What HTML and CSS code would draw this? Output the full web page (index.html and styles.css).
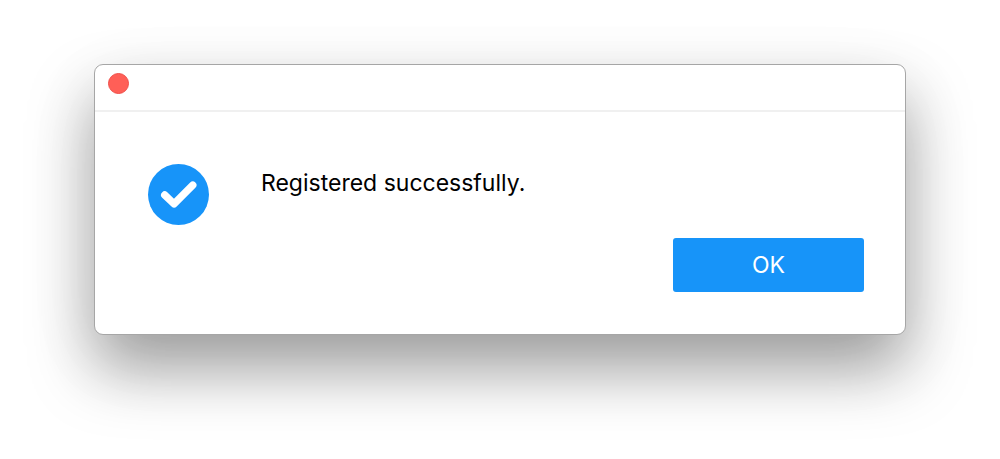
FILE: index.html
```
<!DOCTYPE html>
<html lang="en">
  <head>
    <meta charset="UTF-8" />
    <meta name="viewport" content="width=device-width, initial-scale=1.0" />
    <title>Registration</title>
    <link rel="stylesheet" href="styles.css">
  </head>
  <body>
    <div class="dialog" role="alertdialog" aria-labelledby="message">
      <div class="titlebar">
        <button class="button-close" type="button" aria-label="Close"></button>
      </div>
      <div class="content">
        <div class="content-message">
          <svg class="icon-success" viewBox="0 0 62 62" aria-hidden="true">
            <circle cx="31" cy="31" r="31" fill="#1794f9" />
            <path
              d="M17 31.5 L26.5 40.5 L45.5 21.5"
              fill="none"
              stroke="#fff"
              stroke-width="7.5"
              stroke-linecap="round"
              stroke-linejoin="round"
            />
          </svg>
          <p class="message" id="message">Registered successfully.</p>
        </div>
        <div class="content-actions">
          <button class="button-ok" type="button">OK</button>
        </div>
      </div>
    </div>
  </body>
</html>
```

FILE: styles.css
```
* {
  margin: 0;
  padding: 0;
  font-family: "Inter", sans-serif;
  box-sizing: border-box;
}

body {
  min-height: 100vh;
  padding: 64px 94px 72px 94px;
  background-color: white;
  color: black;
  overflow: hidden;
}

.dialog {
  border: 1px solid #a6a6a6;
  border-radius: 9px;
  background-color: white;
  box-shadow: 0 34px 64px rgba(0, 0, 0, 0.36), 0 20px 80px rgba(0, 0, 0, 0.06);
}

.titlebar {
  height: 47px;
  padding: 8px 13px;
  border-bottom: 2px solid #f0f0f0;
}

.button-close {
  display: block;
  width: 21px;
  height: 21px;
  border: 1px solid #f04e48;
  border-radius: 50%;
  background-color: #ff5f57;
  cursor: pointer;
}

.content {
  padding: 52px 41px 42px 53px;
}

.content-message {
  display: flex;
  gap: 52px;
}

.icon-success {
  width: 61px;
  height: 61px;
}

.message {
  padding-top: 3px;
  font-size: 23px;
  line-height: 32px;
}

.content-actions {
  display: flex;
  justify-content: flex-end;
  margin-top: 13px;
}

.button-ok {
  width: 191px;
  height: 54px;
  border: none;
  border-radius: 3px;
  background-color: #1794f9;
  color: white;
  font-size: 23px;
  cursor: pointer;
}
```
